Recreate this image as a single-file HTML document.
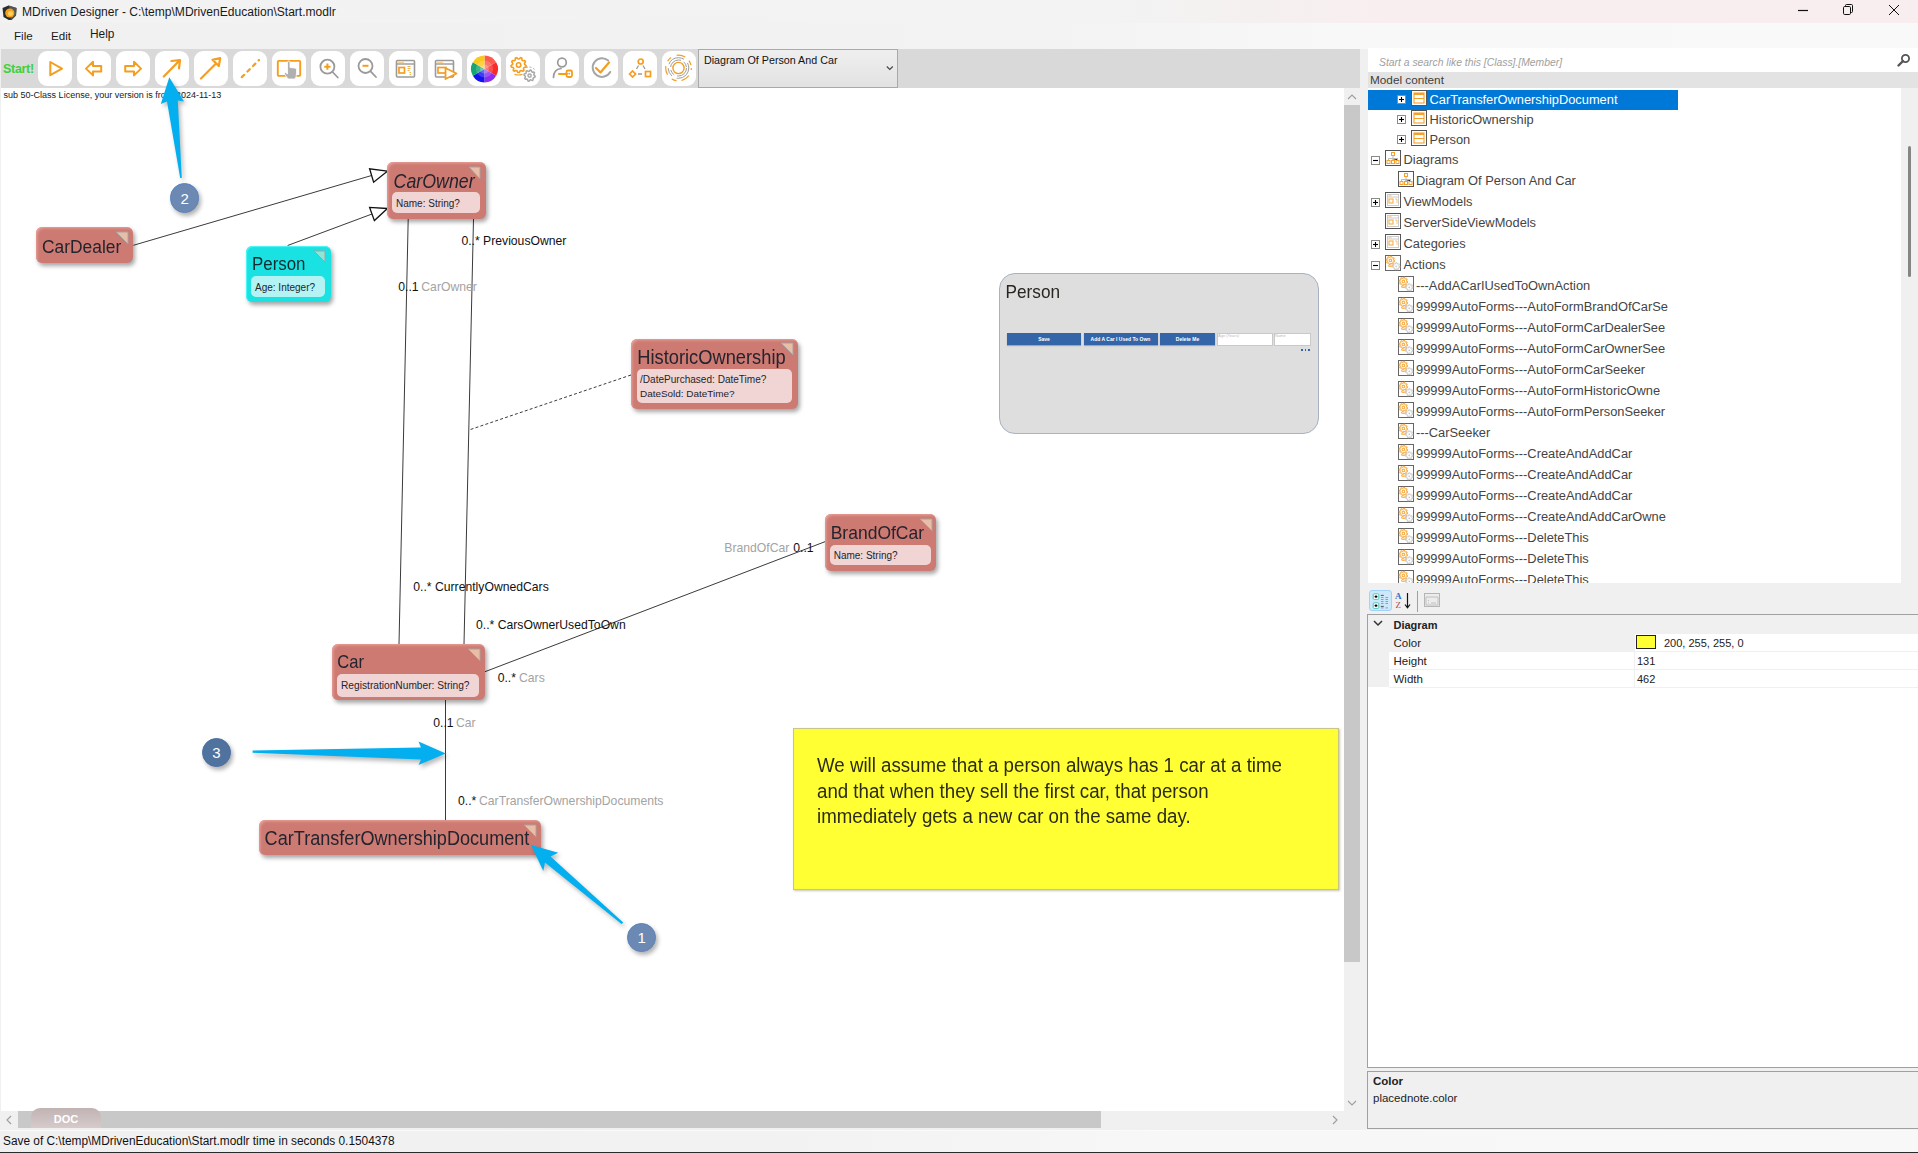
<!DOCTYPE html>
<html><head><meta charset="utf-8">
<style>
*{box-sizing:border-box;margin:0;padding:0}
html,body{width:1918px;height:1153px;overflow:hidden;background:#f0f0f0;font-family:"Liberation Sans",sans-serif;color:#000;position:relative}
.a{position:absolute}
.t{position:absolute;white-space:pre}
#title{left:0;top:0;width:1918px;height:23px;background:linear-gradient(90deg,#f2f2f2 0%,#f3f3f3 58%,#f5f0f0 66%,#f9eeef 73%,#f9eeef 100%)}
#menu{left:0;top:23px;width:1918px;height:26px;background:linear-gradient(90deg,#f0f0f0 0%,#f3f3f3 55%,#f8f8f8 70%,#f9f9f9 100%)}
#tb{left:1px;top:49px;width:1359px;height:39px;background:#d9d9d9}
.btn{position:absolute;top:51px;width:34px;height:35px;background:#fff;border-radius:9px}
.btn svg{position:absolute;left:0;top:0}
#canvas{left:1px;top:88px;width:1343px;height:1023px;background:#fff;overflow:hidden}
#vsb{left:1344px;top:88px;width:16px;height:1023px;background:#f0f0f0}
#hsb{left:0;top:1111px;width:1344px;height:17px;background:#f0f0f0}
#status{left:0;top:1130px;width:1918px;height:22px;background:linear-gradient(90deg,#f0f0f0 0%,#f2f2f2 40%,#f7f7f7 60%,#f8f8f8 100%);border-top:1px solid #fafafa}
.cls{position:absolute;border-radius:6px;background:#cd7a73;box-shadow:2px 3px 4px rgba(0,0,0,.35), inset 2px 2px 3px -1px #eda49c}
.cls.cy{background:#1ae2e2;box-shadow:2px 3px 4px rgba(0,0,0,.35), inset 1px 1px 1px #4ff8f8}
.att{position:absolute;border-radius:5px;background:#f0d5d4}
.cy .att{background:#b4f3f3}
.ct{color:#24242e}
.tri{position:absolute;width:12px;height:12px}
</style></head><body>
<div id="title" class="a"></div>
<div id="menu" class="a"></div>
<svg class="a" style="left:1px;top:3px" width="16" height="17" viewBox="0 0 16 17">
<polygon points="1.5,5 7.5,2.5 15.5,5 15,12.5 9.5,18 2.5,14" fill="#2b2b2b"/>
<polygon points="7.5,2.5 15.5,5 15,12.5 9.5,18 10,9" fill="#555"/>
<circle cx="8.8" cy="10" r="4.6" fill="#f7a21b"/><circle cx="9.5" cy="10.5" r="2.5" fill="#ffd05a"/>
</svg>
<div class="t" style="left:22px;top:6.18px;font-size:12.07px;line-height:12.07px;color:#1a1a1a;">MDriven Designer - C:\temp\MDrivenEducation\Start.modlr</div>
<svg class="a" style="left:1790px;top:0" width="128" height="22">
<line x1="8" y1="10.5" x2="18" y2="10.5" stroke="#111" stroke-width="1.2"/>
<rect x="53.5" y="6.5" width="7" height="8" rx="1.2" fill="none" stroke="#111" stroke-width="1"/>
<path d="M55.5 6.5 V5.5 Q55.5 4.5 56.5 4.5 H61.5 Q62.5 4.5 62.5 5.5 V11.5 Q62.5 12.5 61.5 12.5 H60.5" fill="none" stroke="#111" stroke-width="1"/>
<line x1="99" y1="5" x2="109" y2="15" stroke="#111" stroke-width="1"/><line x1="109" y1="5" x2="99" y2="15" stroke="#111" stroke-width="1"/>
</svg>
<div class="t" style="left:14px;top:29.58px;font-size:11.6px;line-height:11.6px;color:#1a1a1a;">File</div>
<div class="t" style="left:51px;top:29.58px;font-size:11.6px;line-height:11.6px;color:#1a1a1a;">Edit</div>
<div class="t" style="left:90px;top:29.33px;font-size:11.9px;line-height:11.9px;color:#1a1a1a;">Help</div>
<div id="tb" class="a"></div>
<div class="t" style="left:3px;top:60px;font-size:12.5px;line-height:18px;font-weight:bold;color:#3bd13b;letter-spacing:-0.3px">Start!</div>
<div class="btn" style="left:38px"><svg width="34" height="35" viewBox="0 0 34 35"><path d="M12.3 11 L24 17.6 L12.3 24.2 Z" fill="none" stroke="#f59e1e" stroke-width="2" stroke-linejoin="round"/></svg></div>
<div class="btn" style="left:77px"><svg width="34" height="35" viewBox="0 0 34 35"><path d="M9 17.6 L16 10.8 V15 H24.2 V20.4 H16 V24.4 Z" fill="none" stroke="#f59e1e" stroke-width="2" stroke-linejoin="round"/></svg></div>
<div class="btn" style="left:116px"><svg width="34" height="35" viewBox="0 0 34 35"><path d="M25 17.6 L18 10.8 V15 H9.2 V20.4 H18 V24.4 Z" fill="none" stroke="#f59e1e" stroke-width="2" stroke-linejoin="round"/></svg></div>
<div class="btn" style="left:155px"><svg width="34" height="35" viewBox="0 0 34 35"><path d="M8.8 25.5 L24.5 9.5 M16.5 10 L25 9 L24 17.5" fill="none" stroke="#f59e1e" stroke-width="2.2" stroke-linecap="round" stroke-linejoin="round"/></svg></div>
<div class="btn" style="left:194px"><svg width="34" height="35" viewBox="0 0 34 35"><path d="M7 27.5 L21.5 13" fill="none" stroke="#f59e1e" stroke-width="2.2" stroke-linecap="round"/><path d="M18.5 8.8 L26.2 7.2 L24.8 15 Z" fill="none" stroke="#f59e1e" stroke-width="2.2" stroke-linejoin="round"/></svg></div>
<div class="btn" style="left:233px"><svg width="34" height="35" viewBox="0 0 34 35"><path d="M8.5 26.5 L26 9" fill="none" stroke="#f59e1e" stroke-width="2.2" stroke-linecap="round" stroke-dasharray="3.3 4.6" stroke-dashoffset="-0.5"/></svg></div>
<div class="btn" style="left:272px"><svg width="34" height="35" viewBox="0 0 34 35"><rect x="5.8" y="9.9" width="22.4" height="15" rx="0.8" fill="none" stroke="#f59e1e" stroke-width="1.9"/><path d="M15.5 15 V23 L13.5 21.5 Q12 21 12.5 23 L16 28 H23 Q24.5 26 24.5 22 V18.5 Q24.5 17 23 17 L18 16.5 V11.5 Q18 10 16.8 10 Q15.5 10 15.5 11.5 Z" fill="#b0b0b0" stroke="#fff" stroke-width="0.8"/></svg></div>
<div class="btn" style="left:311px"><svg width="34" height="35" viewBox="0 0 34 35"><circle cx="16.4" cy="15.7" r="7" fill="none" stroke="#9a9a9a" stroke-width="1.8"/><path d="M21.5 21 L26.8 26.5" stroke="#9a9a9a" stroke-width="1.8" stroke-linecap="round"/><path d="M13.3 15.7 H19.5 M16.4 12.6 V18.8" stroke="#f59e1e" stroke-width="2"/></svg></div>
<div class="btn" style="left:350px"><svg width="34" height="35" viewBox="0 0 34 35"><circle cx="15.5" cy="15" r="7" fill="none" stroke="#9a9a9a" stroke-width="1.8"/><path d="M20.6 20.3 L26 26" stroke="#9a9a9a" stroke-width="1.8" stroke-linecap="round"/><path d="M12.5 14.8 H18.5" stroke="#f59e1e" stroke-width="2"/></svg></div>
<div class="btn" style="left:389px"><svg width="34" height="35" viewBox="0 0 34 35"><rect x="7.5" y="9.5" width="18" height="16.5" rx="1" fill="none" stroke="#9a9a9a" stroke-width="1.6"/><path d="M7.5 13 H25.5" stroke="#9a9a9a" stroke-width="1.4"/><path d="M9.5 11.3 h1 m1 0 h1 m1 0 h1" stroke="#f59e1e" stroke-width="1.2"/><rect x="10" y="16.5" width="5.5" height="5.5" fill="none" stroke="#f59e1e" stroke-width="1.7"/><path d="M18.5 15.5 h3 M18.5 17.5 h3 M18.5 19.5 h2 M20.5 21.5 h1.5 M20.5 23.5 h1.5" stroke="#f59e1e" stroke-width="1" opacity=".8"/></svg></div>
<div class="btn" style="left:428px"><svg width="34" height="35" viewBox="0 0 34 35"><rect x="7.5" y="9.5" width="18" height="16.5" rx="1" fill="none" stroke="#9a9a9a" stroke-width="1.6"/><path d="M7.5 13 H25.5" stroke="#9a9a9a" stroke-width="1.4"/><path d="M9.5 11.3 h1 m1 0 h1 m1 0 h1" stroke="#f59e1e" stroke-width="1.2"/><rect x="10" y="16.5" width="8" height="5.5" fill="none" stroke="#f59e1e" stroke-width="1.7"/><path d="M17.5 17 L28.5 22.5 L17.5 28 Z" fill="#fff" stroke="#f59e1e" stroke-width="1.8" stroke-linejoin="round"/></svg></div>
<div class="btn" style="left:467px"><svg width="34" height="35" viewBox="0 0 34 35"><path d="M17.5 18 L17.50 4.50 A13.5 13.5 0 0 1 29.19 11.25 Z" fill="#fb5a4e"/><path d="M17.5 18 L29.19 11.25 A13.5 13.5 0 0 1 29.19 24.75 Z" fill="#f82b2b"/><path d="M17.5 18 L29.19 24.75 A13.5 13.5 0 0 1 17.50 31.50 Z" fill="#8e2cf0"/><path d="M17.5 18 L17.50 31.50 A13.5 13.5 0 0 1 5.81 24.75 Z" fill="#1313f0"/><path d="M17.5 18 L5.81 24.75 A13.5 13.5 0 0 1 5.81 11.25 Z" fill="#17a673"/><path d="M17.5 18 L5.81 11.25 A13.5 13.5 0 0 1 17.50 4.50 Z" fill="#f9c81a"/><circle cx="17.5" cy="18" r="8.5" fill="#fff" opacity=".18"/><circle cx="17.5" cy="18" r="4.5" fill="#fff" opacity=".22"/></svg></div>
<div class="btn" style="left:506px"><svg width="34" height="35" viewBox="0 0 34 35"><polygon points="20.17,14.66 19.94,15.97 18.04,16.54 17.51,17.44 17.97,19.37 16.96,20.23 15.14,19.44 14.15,19.80 13.26,21.57 11.94,21.57 11.05,19.80 10.06,19.44 8.24,20.23 7.23,19.37 7.69,17.44 7.16,16.54 5.26,15.97 5.03,14.66 6.62,13.48 6.80,12.45 5.71,10.79 6.37,9.64 8.36,9.76 9.16,9.09 9.39,7.11 10.63,6.66 12.08,8.02 13.12,8.02 14.57,6.66 15.81,7.11 16.04,9.09 16.84,9.76 18.83,9.64 19.49,10.79 18.40,12.45 18.58,13.48" fill="none" stroke="#f59e1e" stroke-width="1.6" stroke-linejoin="round"/><circle cx="12.6" cy="14" r="2.2" fill="none" stroke="#f59e1e" stroke-width="1.6"/><polygon points="29.17,25.15 28.96,26.23 27.48,26.67 27.00,27.39 27.15,28.93 26.24,29.54 24.88,28.81 24.03,28.98 23.05,30.17 21.97,29.96 21.53,28.48 20.81,28.00 19.27,28.15 18.66,27.24 19.39,25.88 19.22,25.03 18.03,24.05 18.24,22.97 19.72,22.53 20.20,21.81 20.05,20.27 20.96,19.66 22.32,20.39 23.17,20.22 24.15,19.03 25.23,19.24 25.67,20.72 26.39,21.20 27.93,21.05 28.54,21.96 27.81,23.32 27.98,24.17" fill="none" stroke="#a8a8a8" stroke-width="1.5" stroke-linejoin="round"/><circle cx="23.6" cy="24.6" r="1.6" fill="none" stroke="#a8a8a8" stroke-width="1.5"/><path d="M8.5 23.2 Q12.5 24.8 16.5 23.2" stroke="#f59e1e" stroke-width="1.1" fill="none"/><path d="M20 16.5 A8 8 0 0 1 29 19" stroke="#a8a8a8" stroke-width="1" fill="none" stroke-dasharray="2 1.5"/></svg></div>
<div class="btn" style="left:545px"><svg width="34" height="35" viewBox="0 0 34 35"><circle cx="17" cy="11.5" r="4.3" fill="none" stroke="#9a9a9a" stroke-width="1.7"/><path d="M8.5 26.5 Q8.5 18.5 16 17.5" fill="none" stroke="#9a9a9a" stroke-width="1.7" stroke-linecap="round"/><path d="M14 23 H22" stroke="#f59e1e" stroke-width="2" stroke-linecap="round"/><rect x="21.5" y="19.5" width="5.5" height="6.5" rx="1.5" fill="none" stroke="#f59e1e" stroke-width="1.8"/><circle cx="24.2" cy="22.6" r="0.9" fill="#f59e1e"/></svg></div>
<div class="btn" style="left:584px"><svg width="34" height="35" viewBox="0 0 34 35"><path d="M24.2 9.6 A9.3 9.3 0 1 0 26.2 21" fill="none" stroke="#a6a6a6" stroke-width="2" stroke-linecap="round"/><path d="M12 17 L16.5 21.5 L25 11.5" fill="none" stroke="#f59e1e" stroke-width="2.2" stroke-linecap="round" stroke-linejoin="round"/></svg></div>
<div class="btn" style="left:623px"><svg width="34" height="35" viewBox="0 0 34 35"><circle cx="17.7" cy="10.5" r="2.5" fill="none" stroke="#f59e1e" stroke-width="1.7"/><path d="M9.6 20 L12.6 23 L9.6 26 L6.6 23 Z" fill="none" stroke="#f59e1e" stroke-width="1.7"/><rect x="22.5" y="20.5" width="5" height="5" fill="none" stroke="#f59e1e" stroke-width="1.7"/><path d="M15.5 14.5 L13.5 18 M20 14.5 L22 18 M15 23 H19" stroke="#9a9a9a" stroke-width="1.3"/></svg></div>
<div class="btn" style="left:662px"><svg width="34" height="35" viewBox="0 0 34 35"><circle cx="16.5" cy="17" r="5.6" fill="none" stroke="#f59e1e" stroke-width="1.4"/><circle cx="16.5" cy="17" r="8" fill="none" stroke="#9c9c9c" stroke-width="1" stroke-dasharray="14 3 6 3"/><circle cx="16.5" cy="17" r="10.3" fill="none" stroke="#9c9c9c" stroke-width="1" stroke-dasharray="18 5 9 4"/><circle cx="16.5" cy="17" r="12.8" fill="none" stroke="#f59e1e" stroke-width="1.2" stroke-dasharray="5 6 9 5" stroke-dashoffset="3"/></svg></div>
<div class="a" style="left:698px;top:49px;width:200px;height:39px;background:linear-gradient(#efefef,#e2e2e2);border:1px solid #a9a9a9"></div>
<div class="t" style="left:704px;top:55.03px;font-size:10.72px;line-height:10.72px;color:#111;">Diagram Of Person And Car</div>
<svg class="a" style="left:884.5px;top:64.5px" width="10" height="7"><path d="M1.8 1.5 L4.8 4.5 L7.8 1.5" fill="none" stroke="#444" stroke-width="1.1"/></svg>
<div id="canvas" class="a"></div>
<div id="vsb" class="a"><div class="a" style="left:0;top:17px;width:16px;height:857px;background:#c8c8c8"></div></div>
<svg class="a" style="left:1346px;top:92px" width="12" height="10"><path d="M2 7 L6 3 L10 7" fill="none" stroke="#a0a0a0" stroke-width="1.2"/></svg>
<svg class="a" style="left:1346px;top:1098px" width="12" height="10"><path d="M2 3 L6 7 L10 3" fill="none" stroke="#a0a0a0" stroke-width="1.2"/></svg>
<div id="hsb" class="a"><div class="a" style="left:18px;top:0;width:1083px;height:17px;background:#c8c8c8"></div></div>
<svg class="a" style="left:4px;top:1114px" width="10" height="12"><path d="M7 2 L3 6 L7 10" fill="none" stroke="#a0a0a0" stroke-width="1.2"/></svg>
<svg class="a" style="left:1330px;top:1114px" width="10" height="12"><path d="M3 2 L7 6 L3 10" fill="none" stroke="#a0a0a0" stroke-width="1.2"/></svg>
<div id="status" class="a"></div>
<div class="a" style="left:0;top:1152px;width:1918px;height:1px;background:#2a2a2a"></div>
<div class="t" style="left:3px;top:1136.45px;font-size:11.87px;line-height:11.87px;color:#111;">Save of C:\temp\MDrivenEducation\Start.modlr time in seconds 0.1504378</div>
<svg class="a" style="left:0;top:0" width="1344" height="1111">
<g stroke="#3a3a3a" stroke-width="1" fill="none">
<line x1="133.4" y1="245.3" x2="371.6" y2="175.5"/>
<polygon points="387.4,171.2 369.6,168.8 373.6,182.2" fill="#fff" stroke="#111" stroke-width="1.3"/>
<line x1="287.6" y1="245.5" x2="372" y2="214"/>
<polygon points="387.4,208.5 369.6,207.4 374.4,220.6" fill="#fff" stroke="#111" stroke-width="1.3"/>
<line x1="408.2" y1="219" x2="399" y2="644"/>
<line x1="473.5" y1="219" x2="464" y2="644"/>
<line x1="631" y1="375" x2="469" y2="430" stroke-dasharray="3 2.2"/>
<line x1="485" y1="671.7" x2="825" y2="541.7"/>
<line x1="445.5" y1="700" x2="445.5" y2="820"/>
</g></svg>
<div class="cls" style="left:387px;top:162px;width:99px;height:57px"></div>
<div class="att" style="left:392px;top:192px;width:88px;height:21px;background:#f0d5d4"></div>
<svg class="a" style="left:468px;top:166px" width="13" height="14"><polygon points="1,1 12,1 12,13" fill="#e8bfa6" stroke="#a8a0a0" stroke-width="1"/></svg>
<div class="t" style="left:393.6px;top:173.63px;font-size:17.8px;line-height:17.8px;color:#24242e;transform:scaleY(1.1);transform-origin:0 15.07px;font-style:italic">CarOwner</div>
<div class="t" style="left:396px;top:199.03px;font-size:10px;line-height:10px;color:#24242e;">Name: String?</div>
<div class="cls" style="left:36px;top:227px;width:97px;height:36px"></div>
<svg class="a" style="left:115px;top:231px" width="14" height="14"><polygon points="1,1 13,1 13,13" fill="#e8bfa6" stroke="#a8a0a0" stroke-width="1"/></svg>
<div class="t" style="left:42px;top:238.87px;font-size:17.4px;line-height:17.4px;color:#24242e;transform:scaleY(1.1);transform-origin:0 14.73px;">CarDealer</div>
<div class="cls cy" style="left:246px;top:246px;width:85px;height:56px"></div>
<div class="att" style="left:251px;top:276px;width:74px;height:21px;background:#b4f3f3"></div>
<svg class="a" style="left:313px;top:250px" width="13" height="13"><polygon points="1,1 12,1 12,12" fill="#8fe6d8" stroke="#a8a0a0" stroke-width="1"/></svg>
<div class="t" style="left:252px;top:257.39px;font-size:16.9px;line-height:16.9px;color:#102a30;transform:scaleY(1.1);transform-origin:0 14.31px;">Person</div>
<div class="t" style="left:255px;top:283.04px;font-size:10px;line-height:10px;color:#24242e;">Age: Integer?</div>
<div class="cls" style="left:631px;top:339px;width:167px;height:70px"></div>
<div class="att" style="left:637px;top:369px;width:155px;height:34px;background:#f0d5d4"></div>
<svg class="a" style="left:780px;top:342px" width="14" height="14"><polygon points="1,1 13,1 13,13" fill="#e8bfa6" stroke="#a8a0a0" stroke-width="1"/></svg>
<div class="t" style="left:637.3px;top:348.71px;font-size:18.3px;line-height:18.3px;color:#24242e;transform:scaleY(1.1);transform-origin:0 15.49px;">HistoricOwnership</div>
<div class="t" style="left:640px;top:375.18px;font-size:10.06px;line-height:10.06px;color:#24242e;">/DatePurchased: DateTime?</div>
<div class="t" style="left:640px;top:389.09px;font-size:9.94px;line-height:9.94px;color:#24242e;">DateSold: DateTime?</div>
<div class="cls" style="left:825px;top:514px;width:111px;height:57px"></div>
<div class="att" style="left:830px;top:545px;width:101px;height:20px;background:#f0d5d4"></div>
<svg class="a" style="left:919px;top:518px" width="14" height="14"><polygon points="1,1 13,1 13,13" fill="#e8bfa6" stroke="#a8a0a0" stroke-width="1"/></svg>
<div class="t" style="left:830.7px;top:525.39px;font-size:17.5px;line-height:17.5px;color:#24242e;transform:scaleY(1.1);transform-origin:0 14.81px;">BrandOfCar</div>
<div class="t" style="left:833.7px;top:550.73px;font-size:10px;line-height:10px;color:#24242e;">Name: String?</div>
<div class="cls" style="left:332px;top:644px;width:153px;height:56px"></div>
<div class="att" style="left:337px;top:674px;width:142px;height:23px;background:#f0d5d4"></div>
<svg class="a" style="left:467px;top:648px" width="14" height="14"><polygon points="1,1 13,1 13,13" fill="#e8bfa6" stroke="#a8a0a0" stroke-width="1"/></svg>
<div class="t" style="left:337.3px;top:655.15px;font-size:16.6px;line-height:16.6px;color:#24242e;transform:scaleY(1.1);transform-origin:0 14.05px;">Car</div>
<div class="t" style="left:341px;top:680.57px;font-size:10.2px;line-height:10.2px;color:#24242e;">RegistrationNumber: String?</div>
<div class="cls" style="left:259px;top:820px;width:282px;height:35px"></div>
<svg class="a" style="left:523px;top:824px" width="14" height="14"><polygon points="1,1 13,1 13,13" fill="#e8bfa6" stroke="#a8a0a0" stroke-width="1"/></svg>
<div class="t" style="left:264.6px;top:830.18px;font-size:18.1px;line-height:18.1px;color:#24242e;transform:scaleY(1.1);transform-origin:0 15.32px;">CarTransferOwnershipDocument</div>
<div class="t" style="left:461.4px;top:235.37px;font-size:12.2px;line-height:12.2px;color:#111;">0..* PreviousOwner</div>
<div class="t" style="left:398.3px;top:280.57px;font-size:12.2px;line-height:12.2px;color:#111;">0..1</div>
<div class="t" style="left:421.3px;top:280.57px;font-size:12.2px;line-height:12.2px;color:#a3a3a3;">CarOwner</div>
<div class="t" style="left:724.3px;top:541.57px;font-size:12.2px;line-height:12.2px;color:#a3a3a3;">BrandOfCar</div>
<div class="t" style="left:793.3px;top:541.57px;font-size:12.2px;line-height:12.2px;color:#111;">0..1</div>
<div class="t" style="left:413.3px;top:580.57px;font-size:12.2px;line-height:12.2px;color:#111;">0..* CurrentlyOwnedCars</div>
<div class="t" style="left:476px;top:618.87px;font-size:12.2px;line-height:12.2px;color:#111;">0..* CarsOwnerUsedToOwn</div>
<div class="t" style="left:497.7px;top:671.57px;font-size:12.2px;line-height:12.2px;color:#111;">0..*</div>
<div class="t" style="left:519px;top:671.57px;font-size:12.2px;line-height:12.2px;color:#a3a3a3;">Cars</div>
<div class="t" style="left:433.3px;top:716.57px;font-size:12.2px;line-height:12.2px;color:#111;">0..1</div>
<div class="t" style="left:456px;top:716.57px;font-size:12.2px;line-height:12.2px;color:#a3a3a3;">Car</div>
<div class="t" style="left:458px;top:794.57px;font-size:12.2px;line-height:12.2px;color:#111;">0..*</div>
<div class="t" style="left:479px;top:794.57px;font-size:12.2px;line-height:12.2px;color:#a3a3a3;">CarTransferOwnershipDocuments</div>
<div class="a" style="left:999px;top:273px;width:320px;height:161px;background:#dedede;border:1px solid #a7b3c0;border-radius:16px"></div>
<div class="t" style="left:1005.6px;top:283.94px;font-size:17.2px;line-height:17.2px;color:#2a2520;transform:scaleY(1.08);transform-origin:0 100%">Person</div>
<div class="a" style="left:1007px;top:333px;width:74px;height:12px;background:#3465a8;box-shadow:0 1px 1px rgba(0,0,0,.25)"></div>
<div class="t" style="left:1007px;top:336px;width:74px;text-align:center;font-size:5px;line-height:6px;color:#fff;font-weight:bold">Save</div>
<div class="a" style="left:1083.5px;top:333px;width:74.0px;height:12px;background:#3465a8;box-shadow:0 1px 1px rgba(0,0,0,.25)"></div>
<div class="t" style="left:1083.5px;top:336px;width:74.0px;text-align:center;font-size:5px;line-height:6px;color:#fff;font-weight:bold">Add A Car I Used To Own</div>
<div class="a" style="left:1160px;top:333px;width:55px;height:12px;background:#3465a8;box-shadow:0 1px 1px rgba(0,0,0,.25)"></div>
<div class="t" style="left:1160px;top:336px;width:55px;text-align:center;font-size:5px;line-height:6px;color:#fff;font-weight:bold">Delete Me</div>
<div class="a" style="left:1216.5px;top:332.5px;width:56px;height:13px;background:#fff;border:1px solid #c9c9c9"></div>
<div class="a" style="left:1273.5px;top:332.5px;width:37px;height:13px;background:#fff;border:1px solid #c9c9c9"></div>
<div class="t" style="left:1218px;top:333px;font-size:4px;line-height:5px;color:#bbb">Age (Years)</div>
<div class="t" style="left:1275px;top:333px;font-size:4px;line-height:5px;color:#bbb">Name</div>
<div class="a" style="left:1301px;top:349px;width:9px;height:2px;background:repeating-linear-gradient(90deg,#3465a8 0 2px,transparent 2px 3.5px)"></div>
<div class="a" style="left:793px;top:728px;width:546px;height:162px;background:#ffff33;border:1px solid #c6c68c;box-shadow:1px 1px 2px rgba(90,90,40,.35), inset 0 0 1px #e0e070"></div>
<div class="t" style="left:817px;top:757.08px;font-size:18.69px;line-height:18.69px;color:#2b2b1a;transform:scaleY(1.1);transform-origin:0 15.82px;">We will assume that a person always has 1 car at a time</div>
<div class="t" style="left:817px;top:782.78px;font-size:18.69px;line-height:18.69px;color:#2b2b1a;transform:scaleY(1.1);transform-origin:0 15.82px;">and that when they sell the first car, that person</div>
<div class="t" style="left:817px;top:808.28px;font-size:18.69px;line-height:18.69px;color:#2b2b1a;transform:scaleY(1.1);transform-origin:0 15.82px;">immediately gets a new car on the same day.</div>
<div class="t" style="left:3.5px;top:91.26px;font-size:9.02px;line-height:9.02px;color:#1a1a1a;">sub 50-Class License, your version is from 2024-11-13</div>
<svg class="a" style="left:0;top:0;filter:drop-shadow(2px 3px 2px rgba(0,0,0,.28))" width="1344" height="1111">
<polygon fill="#03afef" points="169.3,77.2 184,101.6 177.8,100.5 181.8,178 180.2,178 167,101.5 160.8,104"/>
<polygon fill="#03afef" points="252.6,750.6 421,747.4 418.5,741.5 445.8,753.5 418.5,765 421,759.6 252.6,752.8"/>
<polygon fill="#03afef" points="531,845 558.3,852.7 550.5,856.5 623.2,922.4 621.5,924 545,862.5 543.3,871"/>
</svg>
<div class="a" style="left:169.9px;top:183.3px;width:29.4px;height:29.4px;border-radius:50%;background:#6c89b3;border:1.3px solid #5b82bd;box-shadow:2px 3px 4px rgba(0,0,0,.3)"></div>
<div class="t" style="left:174.6px;top:189.5px;width:20px;text-align:center;font-size:15px;line-height:17px;color:#fff">2</div>
<div class="a" style="left:201.8px;top:738.0999999999999px;width:29.4px;height:29.4px;border-radius:50%;background:#50729f;border:1.3px solid #4a6fa8;box-shadow:2px 3px 4px rgba(0,0,0,.3)"></div>
<div class="t" style="left:206.5px;top:744.3px;width:20px;text-align:center;font-size:15px;line-height:17px;color:#fff">3</div>
<div class="a" style="left:626.9px;top:923.0999999999999px;width:29.4px;height:29.4px;border-radius:50%;background:#6c89b3;border:1.3px solid #5b82bd;box-shadow:2px 3px 4px rgba(0,0,0,.3)"></div>
<div class="t" style="left:631.6px;top:929.3px;width:20px;text-align:center;font-size:15px;line-height:17px;color:#fff">1</div>
<div class="a" style="left:31px;top:1108px;width:70px;height:20px;border-radius:9px 9px 0 0;background:linear-gradient(#c2b3b3,#d6caca)"></div>
<div class="t" style="left:31px;top:1113px;width:70px;text-align:center;font-size:11px;line-height:12px;color:#fff;font-weight:bold">DOC</div>
<div class="a" style="left:1368px;top:48px;width:550px;height:24px;background:#fff"></div>
<div class="t" style="left:1379px;top:57.73px;font-size:10.36px;line-height:10.36px;color:#a0a0a0;font-style:italic">Start a search like this [Class].[Member]</div>
<svg class="a" style="left:1896px;top:53px" width="16" height="15"><circle cx="9.5" cy="5.5" r="3.6" fill="none" stroke="#555" stroke-width="1.8"/><path d="M7 8 L2.5 12.5" stroke="#555" stroke-width="2.4" stroke-linecap="round"/></svg>
<div class="a" style="left:1368px;top:72px;width:550px;height:17px;background:#e3e3e3"></div>
<div class="t" style="left:1370px;top:74.13px;font-size:11.78px;line-height:11.78px;color:#404040;">Model content</div>
<div class="a" style="left:1368px;top:88px;width:533px;height:495px;background:#fff;overflow:hidden" id="tree"></div>
<div class="a" style="left:1901px;top:88px;width:17px;height:495px;background:#f0f0f0"></div>
<div class="a" style="left:1907.5px;top:146px;width:3px;height:131px;background:#858585;border-radius:1.5px"></div>
<div class="a" style="left:1368px;top:90px;width:310px;height:20px;background:#0078d7"></div>
<div class="a" style="left:1368px;top:88px;width:532px;height:495px;overflow:hidden">
<div class="a" style="left:-1368px;top:-88px;width:1918px;height:1153px">
<svg class="a" style="left:1397px;top:95px" width="9" height="9"><rect x="0.5" y="0.5" width="8" height="8" fill="#fff" stroke="#8a8a8a" stroke-width="1"/><path d="M2 4.5 H7" stroke="#000" stroke-width="1.1"/><path d="M4.5 2 V7" stroke="#000" stroke-width="1.1"/></svg>
<svg class="a" style="left:1411px;top:90px" width="16" height="16"><rect x="0.5" y="0.5" width="15" height="15" fill="#fff" stroke="#555" stroke-width="1"/><rect x="3" y="3" width="10" height="10" fill="#fff" stroke="#f5a02a" stroke-width="1.1"/><rect x="3" y="3" width="10" height="2" fill="#f5a02a"/><path d="M3 8.5 H13" stroke="#f5a02a" stroke-width="1"/></svg>
<div class="t" style="left:1429.5px;top:94.02px;font-size:12.85px;line-height:12.85px;color:#fff;">CarTransferOwnershipDocument</div>
<svg class="a" style="left:1397px;top:115px" width="9" height="9"><rect x="0.5" y="0.5" width="8" height="8" fill="#fff" stroke="#8a8a8a" stroke-width="1"/><path d="M2 4.5 H7" stroke="#000" stroke-width="1.1"/><path d="M4.5 2 V7" stroke="#000" stroke-width="1.1"/></svg>
<svg class="a" style="left:1411px;top:110px" width="16" height="16"><rect x="0.5" y="0.5" width="15" height="15" fill="#fff" stroke="#555" stroke-width="1"/><rect x="3" y="3" width="10" height="10" fill="#fff" stroke="#f5a02a" stroke-width="1.1"/><rect x="3" y="3" width="10" height="2" fill="#f5a02a"/><path d="M3 8.5 H13" stroke="#f5a02a" stroke-width="1"/></svg>
<div class="t" style="left:1429.5px;top:114.02px;font-size:12.85px;line-height:12.85px;color:#444;">HistoricOwnership</div>
<svg class="a" style="left:1397px;top:135px" width="9" height="9"><rect x="0.5" y="0.5" width="8" height="8" fill="#fff" stroke="#8a8a8a" stroke-width="1"/><path d="M2 4.5 H7" stroke="#000" stroke-width="1.1"/><path d="M4.5 2 V7" stroke="#000" stroke-width="1.1"/></svg>
<svg class="a" style="left:1411px;top:130px" width="16" height="16"><rect x="0.5" y="0.5" width="15" height="15" fill="#fff" stroke="#555" stroke-width="1"/><rect x="3" y="3" width="10" height="10" fill="#fff" stroke="#f5a02a" stroke-width="1.1"/><rect x="3" y="3" width="10" height="2" fill="#f5a02a"/><path d="M3 8.5 H13" stroke="#f5a02a" stroke-width="1"/></svg>
<div class="t" style="left:1429.5px;top:134.02px;font-size:12.85px;line-height:12.85px;color:#444;">Person</div>
<svg class="a" style="left:1371px;top:156px" width="9" height="9"><rect x="0.5" y="0.5" width="8" height="8" fill="#fff" stroke="#8a8a8a" stroke-width="1"/><path d="M2 4.5 H7" stroke="#000" stroke-width="1.1"/></svg>
<svg class="a" style="left:1385px;top:150px" width="16" height="16"><rect x="0.5" y="0.5" width="15" height="15" fill="#fff" stroke="#555" stroke-width="1"/><rect x="6.5" y="2.5" width="3" height="3" fill="none" stroke="#f5a02a" stroke-width="1"/><path d="M8 6 V8 M3.5 8.5 H12.5 V10 M3.5 8.5 V10 M8 8 V10" stroke="#bbb" stroke-width="1"/><rect x="2" y="10.5" width="3" height="3" fill="none" stroke="#f5a02a" stroke-width="1"/><rect x="6.5" y="10.5" width="3" height="3" fill="none" stroke="#f5a02a" stroke-width="1"/><rect x="11" y="10.5" width="3" height="3" fill="none" stroke="#f5a02a" stroke-width="1"/></svg>
<div class="t" style="left:1403.5px;top:154.02px;font-size:12.85px;line-height:12.85px;color:#444;">Diagrams</div>
<svg class="a" style="left:1398px;top:171px" width="16" height="16"><rect x="0.5" y="0.5" width="15" height="15" fill="#fff" stroke="#555" stroke-width="1"/><rect x="6.5" y="2.5" width="3" height="3" fill="none" stroke="#f5a02a" stroke-width="1"/><path d="M8 6 V8 M3.5 8.5 H12.5 V10 M3.5 8.5 V10 M8 8 V10" stroke="#bbb" stroke-width="1"/><rect x="2" y="10.5" width="3" height="3" fill="none" stroke="#f5a02a" stroke-width="1"/><rect x="6.5" y="10.5" width="3" height="3" fill="none" stroke="#f5a02a" stroke-width="1"/><rect x="11" y="10.5" width="3" height="3" fill="none" stroke="#f5a02a" stroke-width="1"/></svg>
<div class="t" style="left:1416px;top:175.02px;font-size:12.85px;line-height:12.85px;color:#444;">Diagram Of Person And Car</div>
<svg class="a" style="left:1371px;top:198px" width="9" height="9"><rect x="0.5" y="0.5" width="8" height="8" fill="#fff" stroke="#8a8a8a" stroke-width="1"/><path d="M2 4.5 H7" stroke="#000" stroke-width="1.1"/><path d="M4.5 2 V7" stroke="#000" stroke-width="1.1"/></svg>
<svg class="a" style="left:1385px;top:192px" width="16" height="16"><rect x="0.5" y="0.5" width="15" height="15" fill="#fff" stroke="#555" stroke-width="1"/><rect x="2.5" y="2.5" width="11" height="11" fill="none" stroke="#ccc" stroke-width="1"/><path d="M2.5 5 H13.5" stroke="#ccc"/><rect x="4" y="7" width="4" height="4" fill="none" stroke="#f5a02a" stroke-width="1.2" opacity=".8"/><path d="M10 7 h2 v4" stroke="#f5a02a" stroke-width="1" fill="none" opacity=".6"/><path d="M3.5 3.8 h3" stroke="#f5a02a" stroke-width="1" opacity=".6"/></svg>
<div class="t" style="left:1403.5px;top:196.02px;font-size:12.85px;line-height:12.85px;color:#444;">ViewModels</div>
<svg class="a" style="left:1385px;top:213px" width="16" height="16"><rect x="0.5" y="0.5" width="15" height="15" fill="#fff" stroke="#555" stroke-width="1"/><rect x="2.5" y="2.5" width="11" height="11" fill="none" stroke="#ccc" stroke-width="1"/><path d="M2.5 5 H13.5" stroke="#ccc"/><rect x="4" y="7" width="4" height="4" fill="none" stroke="#f5a02a" stroke-width="1.2" opacity=".8"/><path d="M10 7 h2 v4" stroke="#f5a02a" stroke-width="1" fill="none" opacity=".6"/><path d="M3.5 3.8 h3" stroke="#f5a02a" stroke-width="1" opacity=".6"/></svg>
<div class="t" style="left:1403.5px;top:217.02px;font-size:12.85px;line-height:12.85px;color:#444;">ServerSideViewModels</div>
<svg class="a" style="left:1371px;top:240px" width="9" height="9"><rect x="0.5" y="0.5" width="8" height="8" fill="#fff" stroke="#8a8a8a" stroke-width="1"/><path d="M2 4.5 H7" stroke="#000" stroke-width="1.1"/><path d="M4.5 2 V7" stroke="#000" stroke-width="1.1"/></svg>
<svg class="a" style="left:1385px;top:234px" width="16" height="16"><rect x="0.5" y="0.5" width="15" height="15" fill="#fff" stroke="#555" stroke-width="1"/><rect x="2.5" y="2.5" width="11" height="11" fill="none" stroke="#ccc" stroke-width="1"/><path d="M2.5 5 H13.5" stroke="#ccc"/><rect x="4" y="7" width="4" height="4" fill="none" stroke="#f5a02a" stroke-width="1.2" opacity=".8"/><path d="M10 7 h2 v4" stroke="#f5a02a" stroke-width="1" fill="none" opacity=".6"/><path d="M3.5 3.8 h3" stroke="#f5a02a" stroke-width="1" opacity=".6"/></svg>
<div class="t" style="left:1403.5px;top:238.02px;font-size:12.85px;line-height:12.85px;color:#444;">Categories</div>
<svg class="a" style="left:1371px;top:261px" width="9" height="9"><rect x="0.5" y="0.5" width="8" height="8" fill="#fff" stroke="#8a8a8a" stroke-width="1"/><path d="M2 4.5 H7" stroke="#000" stroke-width="1.1"/></svg>
<svg class="a" style="left:1385px;top:255px" width="16" height="16"><rect x="0.5" y="0.5" width="15" height="15" fill="#fff" stroke="#666" stroke-width="1"/><polygon points="14.88,11.70 14.70,12.49 13.59,12.74 13.21,13.21 13.22,14.35 12.49,14.70 11.60,13.98 11.00,13.98 10.11,14.70 9.38,14.35 9.39,13.21 9.01,12.74 7.90,12.49 7.72,11.70 8.62,11.00 8.75,10.41 8.25,9.38 8.75,8.75 9.86,9.01 10.41,8.75 10.90,7.72 11.70,7.72 12.19,8.75 12.74,9.01 13.85,8.75 14.35,9.38 13.85,10.41 13.98,11.00" fill="none" stroke="#cfcfcf" stroke-width="1.1" stroke-linejoin="round"/><circle cx="11.3" cy="11.3" r="0.9" fill="#c4c4c4"/><polygon points="9.58,5.81 9.42,6.62 8.22,6.91 7.87,7.43 8.06,8.65 7.38,9.10 6.33,8.46 5.71,8.58 4.99,9.58 4.18,9.42 3.89,8.22 3.37,7.87 2.15,8.06 1.70,7.38 2.34,6.33 2.22,5.71 1.22,4.99 1.38,4.18 2.58,3.89 2.93,3.37 2.74,2.15 3.42,1.70 4.47,2.34 5.09,2.22 5.81,1.22 6.62,1.38 6.91,2.58 7.43,2.93 8.65,2.74 9.10,3.42 8.46,4.47 8.58,5.09" fill="none" stroke="#f6b04e" stroke-width="1.1" stroke-linejoin="round"/><circle cx="5.4" cy="5.4" r="1.3" fill="none" stroke="#f6b04e" stroke-width="1.1"/><path d="M3 10.5 Q5.5 12.3 8 10.5" stroke="#f6b04e" stroke-width="1.1" fill="none"/></svg>
<div class="t" style="left:1403.5px;top:259.02px;font-size:12.85px;line-height:12.85px;color:#444;">Actions</div>
<svg class="a" style="left:1398px;top:276px" width="16" height="16"><rect x="0.5" y="0.5" width="15" height="15" fill="#fff" stroke="#666" stroke-width="1"/><polygon points="14.88,11.70 14.70,12.49 13.59,12.74 13.21,13.21 13.22,14.35 12.49,14.70 11.60,13.98 11.00,13.98 10.11,14.70 9.38,14.35 9.39,13.21 9.01,12.74 7.90,12.49 7.72,11.70 8.62,11.00 8.75,10.41 8.25,9.38 8.75,8.75 9.86,9.01 10.41,8.75 10.90,7.72 11.70,7.72 12.19,8.75 12.74,9.01 13.85,8.75 14.35,9.38 13.85,10.41 13.98,11.00" fill="none" stroke="#cfcfcf" stroke-width="1.1" stroke-linejoin="round"/><circle cx="11.3" cy="11.3" r="0.9" fill="#c4c4c4"/><polygon points="9.58,5.81 9.42,6.62 8.22,6.91 7.87,7.43 8.06,8.65 7.38,9.10 6.33,8.46 5.71,8.58 4.99,9.58 4.18,9.42 3.89,8.22 3.37,7.87 2.15,8.06 1.70,7.38 2.34,6.33 2.22,5.71 1.22,4.99 1.38,4.18 2.58,3.89 2.93,3.37 2.74,2.15 3.42,1.70 4.47,2.34 5.09,2.22 5.81,1.22 6.62,1.38 6.91,2.58 7.43,2.93 8.65,2.74 9.10,3.42 8.46,4.47 8.58,5.09" fill="none" stroke="#f6b04e" stroke-width="1.1" stroke-linejoin="round"/><circle cx="5.4" cy="5.4" r="1.3" fill="none" stroke="#f6b04e" stroke-width="1.1"/><path d="M3 10.5 Q5.5 12.3 8 10.5" stroke="#f6b04e" stroke-width="1.1" fill="none"/></svg>
<div class="t" style="left:1416px;top:280.02px;font-size:12.85px;line-height:12.85px;color:#444;">---AddACarIUsedToOwnAction</div>
<svg class="a" style="left:1398px;top:297px" width="16" height="16"><rect x="0.5" y="0.5" width="15" height="15" fill="#fff" stroke="#666" stroke-width="1"/><polygon points="14.88,11.70 14.70,12.49 13.59,12.74 13.21,13.21 13.22,14.35 12.49,14.70 11.60,13.98 11.00,13.98 10.11,14.70 9.38,14.35 9.39,13.21 9.01,12.74 7.90,12.49 7.72,11.70 8.62,11.00 8.75,10.41 8.25,9.38 8.75,8.75 9.86,9.01 10.41,8.75 10.90,7.72 11.70,7.72 12.19,8.75 12.74,9.01 13.85,8.75 14.35,9.38 13.85,10.41 13.98,11.00" fill="none" stroke="#cfcfcf" stroke-width="1.1" stroke-linejoin="round"/><circle cx="11.3" cy="11.3" r="0.9" fill="#c4c4c4"/><polygon points="9.58,5.81 9.42,6.62 8.22,6.91 7.87,7.43 8.06,8.65 7.38,9.10 6.33,8.46 5.71,8.58 4.99,9.58 4.18,9.42 3.89,8.22 3.37,7.87 2.15,8.06 1.70,7.38 2.34,6.33 2.22,5.71 1.22,4.99 1.38,4.18 2.58,3.89 2.93,3.37 2.74,2.15 3.42,1.70 4.47,2.34 5.09,2.22 5.81,1.22 6.62,1.38 6.91,2.58 7.43,2.93 8.65,2.74 9.10,3.42 8.46,4.47 8.58,5.09" fill="none" stroke="#f6b04e" stroke-width="1.1" stroke-linejoin="round"/><circle cx="5.4" cy="5.4" r="1.3" fill="none" stroke="#f6b04e" stroke-width="1.1"/><path d="M3 10.5 Q5.5 12.3 8 10.5" stroke="#f6b04e" stroke-width="1.1" fill="none"/></svg>
<div class="t" style="left:1416px;top:301.02px;font-size:12.85px;line-height:12.85px;color:#444;">99999AutoForms---AutoFormBrandOfCarSe</div>
<svg class="a" style="left:1398px;top:318px" width="16" height="16"><rect x="0.5" y="0.5" width="15" height="15" fill="#fff" stroke="#666" stroke-width="1"/><polygon points="14.88,11.70 14.70,12.49 13.59,12.74 13.21,13.21 13.22,14.35 12.49,14.70 11.60,13.98 11.00,13.98 10.11,14.70 9.38,14.35 9.39,13.21 9.01,12.74 7.90,12.49 7.72,11.70 8.62,11.00 8.75,10.41 8.25,9.38 8.75,8.75 9.86,9.01 10.41,8.75 10.90,7.72 11.70,7.72 12.19,8.75 12.74,9.01 13.85,8.75 14.35,9.38 13.85,10.41 13.98,11.00" fill="none" stroke="#cfcfcf" stroke-width="1.1" stroke-linejoin="round"/><circle cx="11.3" cy="11.3" r="0.9" fill="#c4c4c4"/><polygon points="9.58,5.81 9.42,6.62 8.22,6.91 7.87,7.43 8.06,8.65 7.38,9.10 6.33,8.46 5.71,8.58 4.99,9.58 4.18,9.42 3.89,8.22 3.37,7.87 2.15,8.06 1.70,7.38 2.34,6.33 2.22,5.71 1.22,4.99 1.38,4.18 2.58,3.89 2.93,3.37 2.74,2.15 3.42,1.70 4.47,2.34 5.09,2.22 5.81,1.22 6.62,1.38 6.91,2.58 7.43,2.93 8.65,2.74 9.10,3.42 8.46,4.47 8.58,5.09" fill="none" stroke="#f6b04e" stroke-width="1.1" stroke-linejoin="round"/><circle cx="5.4" cy="5.4" r="1.3" fill="none" stroke="#f6b04e" stroke-width="1.1"/><path d="M3 10.5 Q5.5 12.3 8 10.5" stroke="#f6b04e" stroke-width="1.1" fill="none"/></svg>
<div class="t" style="left:1416px;top:322.02px;font-size:12.85px;line-height:12.85px;color:#444;">99999AutoForms---AutoFormCarDealerSee</div>
<svg class="a" style="left:1398px;top:339px" width="16" height="16"><rect x="0.5" y="0.5" width="15" height="15" fill="#fff" stroke="#666" stroke-width="1"/><polygon points="14.88,11.70 14.70,12.49 13.59,12.74 13.21,13.21 13.22,14.35 12.49,14.70 11.60,13.98 11.00,13.98 10.11,14.70 9.38,14.35 9.39,13.21 9.01,12.74 7.90,12.49 7.72,11.70 8.62,11.00 8.75,10.41 8.25,9.38 8.75,8.75 9.86,9.01 10.41,8.75 10.90,7.72 11.70,7.72 12.19,8.75 12.74,9.01 13.85,8.75 14.35,9.38 13.85,10.41 13.98,11.00" fill="none" stroke="#cfcfcf" stroke-width="1.1" stroke-linejoin="round"/><circle cx="11.3" cy="11.3" r="0.9" fill="#c4c4c4"/><polygon points="9.58,5.81 9.42,6.62 8.22,6.91 7.87,7.43 8.06,8.65 7.38,9.10 6.33,8.46 5.71,8.58 4.99,9.58 4.18,9.42 3.89,8.22 3.37,7.87 2.15,8.06 1.70,7.38 2.34,6.33 2.22,5.71 1.22,4.99 1.38,4.18 2.58,3.89 2.93,3.37 2.74,2.15 3.42,1.70 4.47,2.34 5.09,2.22 5.81,1.22 6.62,1.38 6.91,2.58 7.43,2.93 8.65,2.74 9.10,3.42 8.46,4.47 8.58,5.09" fill="none" stroke="#f6b04e" stroke-width="1.1" stroke-linejoin="round"/><circle cx="5.4" cy="5.4" r="1.3" fill="none" stroke="#f6b04e" stroke-width="1.1"/><path d="M3 10.5 Q5.5 12.3 8 10.5" stroke="#f6b04e" stroke-width="1.1" fill="none"/></svg>
<div class="t" style="left:1416px;top:343.02px;font-size:12.85px;line-height:12.85px;color:#444;">99999AutoForms---AutoFormCarOwnerSee</div>
<svg class="a" style="left:1398px;top:360px" width="16" height="16"><rect x="0.5" y="0.5" width="15" height="15" fill="#fff" stroke="#666" stroke-width="1"/><polygon points="14.88,11.70 14.70,12.49 13.59,12.74 13.21,13.21 13.22,14.35 12.49,14.70 11.60,13.98 11.00,13.98 10.11,14.70 9.38,14.35 9.39,13.21 9.01,12.74 7.90,12.49 7.72,11.70 8.62,11.00 8.75,10.41 8.25,9.38 8.75,8.75 9.86,9.01 10.41,8.75 10.90,7.72 11.70,7.72 12.19,8.75 12.74,9.01 13.85,8.75 14.35,9.38 13.85,10.41 13.98,11.00" fill="none" stroke="#cfcfcf" stroke-width="1.1" stroke-linejoin="round"/><circle cx="11.3" cy="11.3" r="0.9" fill="#c4c4c4"/><polygon points="9.58,5.81 9.42,6.62 8.22,6.91 7.87,7.43 8.06,8.65 7.38,9.10 6.33,8.46 5.71,8.58 4.99,9.58 4.18,9.42 3.89,8.22 3.37,7.87 2.15,8.06 1.70,7.38 2.34,6.33 2.22,5.71 1.22,4.99 1.38,4.18 2.58,3.89 2.93,3.37 2.74,2.15 3.42,1.70 4.47,2.34 5.09,2.22 5.81,1.22 6.62,1.38 6.91,2.58 7.43,2.93 8.65,2.74 9.10,3.42 8.46,4.47 8.58,5.09" fill="none" stroke="#f6b04e" stroke-width="1.1" stroke-linejoin="round"/><circle cx="5.4" cy="5.4" r="1.3" fill="none" stroke="#f6b04e" stroke-width="1.1"/><path d="M3 10.5 Q5.5 12.3 8 10.5" stroke="#f6b04e" stroke-width="1.1" fill="none"/></svg>
<div class="t" style="left:1416px;top:364.02px;font-size:12.85px;line-height:12.85px;color:#444;">99999AutoForms---AutoFormCarSeeker</div>
<svg class="a" style="left:1398px;top:381px" width="16" height="16"><rect x="0.5" y="0.5" width="15" height="15" fill="#fff" stroke="#666" stroke-width="1"/><polygon points="14.88,11.70 14.70,12.49 13.59,12.74 13.21,13.21 13.22,14.35 12.49,14.70 11.60,13.98 11.00,13.98 10.11,14.70 9.38,14.35 9.39,13.21 9.01,12.74 7.90,12.49 7.72,11.70 8.62,11.00 8.75,10.41 8.25,9.38 8.75,8.75 9.86,9.01 10.41,8.75 10.90,7.72 11.70,7.72 12.19,8.75 12.74,9.01 13.85,8.75 14.35,9.38 13.85,10.41 13.98,11.00" fill="none" stroke="#cfcfcf" stroke-width="1.1" stroke-linejoin="round"/><circle cx="11.3" cy="11.3" r="0.9" fill="#c4c4c4"/><polygon points="9.58,5.81 9.42,6.62 8.22,6.91 7.87,7.43 8.06,8.65 7.38,9.10 6.33,8.46 5.71,8.58 4.99,9.58 4.18,9.42 3.89,8.22 3.37,7.87 2.15,8.06 1.70,7.38 2.34,6.33 2.22,5.71 1.22,4.99 1.38,4.18 2.58,3.89 2.93,3.37 2.74,2.15 3.42,1.70 4.47,2.34 5.09,2.22 5.81,1.22 6.62,1.38 6.91,2.58 7.43,2.93 8.65,2.74 9.10,3.42 8.46,4.47 8.58,5.09" fill="none" stroke="#f6b04e" stroke-width="1.1" stroke-linejoin="round"/><circle cx="5.4" cy="5.4" r="1.3" fill="none" stroke="#f6b04e" stroke-width="1.1"/><path d="M3 10.5 Q5.5 12.3 8 10.5" stroke="#f6b04e" stroke-width="1.1" fill="none"/></svg>
<div class="t" style="left:1416px;top:385.02px;font-size:12.85px;line-height:12.85px;color:#444;">99999AutoForms---AutoFormHistoricOwne</div>
<svg class="a" style="left:1398px;top:402px" width="16" height="16"><rect x="0.5" y="0.5" width="15" height="15" fill="#fff" stroke="#666" stroke-width="1"/><polygon points="14.88,11.70 14.70,12.49 13.59,12.74 13.21,13.21 13.22,14.35 12.49,14.70 11.60,13.98 11.00,13.98 10.11,14.70 9.38,14.35 9.39,13.21 9.01,12.74 7.90,12.49 7.72,11.70 8.62,11.00 8.75,10.41 8.25,9.38 8.75,8.75 9.86,9.01 10.41,8.75 10.90,7.72 11.70,7.72 12.19,8.75 12.74,9.01 13.85,8.75 14.35,9.38 13.85,10.41 13.98,11.00" fill="none" stroke="#cfcfcf" stroke-width="1.1" stroke-linejoin="round"/><circle cx="11.3" cy="11.3" r="0.9" fill="#c4c4c4"/><polygon points="9.58,5.81 9.42,6.62 8.22,6.91 7.87,7.43 8.06,8.65 7.38,9.10 6.33,8.46 5.71,8.58 4.99,9.58 4.18,9.42 3.89,8.22 3.37,7.87 2.15,8.06 1.70,7.38 2.34,6.33 2.22,5.71 1.22,4.99 1.38,4.18 2.58,3.89 2.93,3.37 2.74,2.15 3.42,1.70 4.47,2.34 5.09,2.22 5.81,1.22 6.62,1.38 6.91,2.58 7.43,2.93 8.65,2.74 9.10,3.42 8.46,4.47 8.58,5.09" fill="none" stroke="#f6b04e" stroke-width="1.1" stroke-linejoin="round"/><circle cx="5.4" cy="5.4" r="1.3" fill="none" stroke="#f6b04e" stroke-width="1.1"/><path d="M3 10.5 Q5.5 12.3 8 10.5" stroke="#f6b04e" stroke-width="1.1" fill="none"/></svg>
<div class="t" style="left:1416px;top:406.02px;font-size:12.85px;line-height:12.85px;color:#444;">99999AutoForms---AutoFormPersonSeeker</div>
<svg class="a" style="left:1398px;top:423px" width="16" height="16"><rect x="0.5" y="0.5" width="15" height="15" fill="#fff" stroke="#666" stroke-width="1"/><polygon points="14.88,11.70 14.70,12.49 13.59,12.74 13.21,13.21 13.22,14.35 12.49,14.70 11.60,13.98 11.00,13.98 10.11,14.70 9.38,14.35 9.39,13.21 9.01,12.74 7.90,12.49 7.72,11.70 8.62,11.00 8.75,10.41 8.25,9.38 8.75,8.75 9.86,9.01 10.41,8.75 10.90,7.72 11.70,7.72 12.19,8.75 12.74,9.01 13.85,8.75 14.35,9.38 13.85,10.41 13.98,11.00" fill="none" stroke="#cfcfcf" stroke-width="1.1" stroke-linejoin="round"/><circle cx="11.3" cy="11.3" r="0.9" fill="#c4c4c4"/><polygon points="9.58,5.81 9.42,6.62 8.22,6.91 7.87,7.43 8.06,8.65 7.38,9.10 6.33,8.46 5.71,8.58 4.99,9.58 4.18,9.42 3.89,8.22 3.37,7.87 2.15,8.06 1.70,7.38 2.34,6.33 2.22,5.71 1.22,4.99 1.38,4.18 2.58,3.89 2.93,3.37 2.74,2.15 3.42,1.70 4.47,2.34 5.09,2.22 5.81,1.22 6.62,1.38 6.91,2.58 7.43,2.93 8.65,2.74 9.10,3.42 8.46,4.47 8.58,5.09" fill="none" stroke="#f6b04e" stroke-width="1.1" stroke-linejoin="round"/><circle cx="5.4" cy="5.4" r="1.3" fill="none" stroke="#f6b04e" stroke-width="1.1"/><path d="M3 10.5 Q5.5 12.3 8 10.5" stroke="#f6b04e" stroke-width="1.1" fill="none"/></svg>
<div class="t" style="left:1416px;top:427.02px;font-size:12.85px;line-height:12.85px;color:#444;">---CarSeeker</div>
<svg class="a" style="left:1398px;top:444px" width="16" height="16"><rect x="0.5" y="0.5" width="15" height="15" fill="#fff" stroke="#666" stroke-width="1"/><polygon points="14.88,11.70 14.70,12.49 13.59,12.74 13.21,13.21 13.22,14.35 12.49,14.70 11.60,13.98 11.00,13.98 10.11,14.70 9.38,14.35 9.39,13.21 9.01,12.74 7.90,12.49 7.72,11.70 8.62,11.00 8.75,10.41 8.25,9.38 8.75,8.75 9.86,9.01 10.41,8.75 10.90,7.72 11.70,7.72 12.19,8.75 12.74,9.01 13.85,8.75 14.35,9.38 13.85,10.41 13.98,11.00" fill="none" stroke="#cfcfcf" stroke-width="1.1" stroke-linejoin="round"/><circle cx="11.3" cy="11.3" r="0.9" fill="#c4c4c4"/><polygon points="9.58,5.81 9.42,6.62 8.22,6.91 7.87,7.43 8.06,8.65 7.38,9.10 6.33,8.46 5.71,8.58 4.99,9.58 4.18,9.42 3.89,8.22 3.37,7.87 2.15,8.06 1.70,7.38 2.34,6.33 2.22,5.71 1.22,4.99 1.38,4.18 2.58,3.89 2.93,3.37 2.74,2.15 3.42,1.70 4.47,2.34 5.09,2.22 5.81,1.22 6.62,1.38 6.91,2.58 7.43,2.93 8.65,2.74 9.10,3.42 8.46,4.47 8.58,5.09" fill="none" stroke="#f6b04e" stroke-width="1.1" stroke-linejoin="round"/><circle cx="5.4" cy="5.4" r="1.3" fill="none" stroke="#f6b04e" stroke-width="1.1"/><path d="M3 10.5 Q5.5 12.3 8 10.5" stroke="#f6b04e" stroke-width="1.1" fill="none"/></svg>
<div class="t" style="left:1416px;top:448.02px;font-size:12.85px;line-height:12.85px;color:#444;">99999AutoForms---CreateAndAddCar</div>
<svg class="a" style="left:1398px;top:465px" width="16" height="16"><rect x="0.5" y="0.5" width="15" height="15" fill="#fff" stroke="#666" stroke-width="1"/><polygon points="14.88,11.70 14.70,12.49 13.59,12.74 13.21,13.21 13.22,14.35 12.49,14.70 11.60,13.98 11.00,13.98 10.11,14.70 9.38,14.35 9.39,13.21 9.01,12.74 7.90,12.49 7.72,11.70 8.62,11.00 8.75,10.41 8.25,9.38 8.75,8.75 9.86,9.01 10.41,8.75 10.90,7.72 11.70,7.72 12.19,8.75 12.74,9.01 13.85,8.75 14.35,9.38 13.85,10.41 13.98,11.00" fill="none" stroke="#cfcfcf" stroke-width="1.1" stroke-linejoin="round"/><circle cx="11.3" cy="11.3" r="0.9" fill="#c4c4c4"/><polygon points="9.58,5.81 9.42,6.62 8.22,6.91 7.87,7.43 8.06,8.65 7.38,9.10 6.33,8.46 5.71,8.58 4.99,9.58 4.18,9.42 3.89,8.22 3.37,7.87 2.15,8.06 1.70,7.38 2.34,6.33 2.22,5.71 1.22,4.99 1.38,4.18 2.58,3.89 2.93,3.37 2.74,2.15 3.42,1.70 4.47,2.34 5.09,2.22 5.81,1.22 6.62,1.38 6.91,2.58 7.43,2.93 8.65,2.74 9.10,3.42 8.46,4.47 8.58,5.09" fill="none" stroke="#f6b04e" stroke-width="1.1" stroke-linejoin="round"/><circle cx="5.4" cy="5.4" r="1.3" fill="none" stroke="#f6b04e" stroke-width="1.1"/><path d="M3 10.5 Q5.5 12.3 8 10.5" stroke="#f6b04e" stroke-width="1.1" fill="none"/></svg>
<div class="t" style="left:1416px;top:469.02px;font-size:12.85px;line-height:12.85px;color:#444;">99999AutoForms---CreateAndAddCar</div>
<svg class="a" style="left:1398px;top:486px" width="16" height="16"><rect x="0.5" y="0.5" width="15" height="15" fill="#fff" stroke="#666" stroke-width="1"/><polygon points="14.88,11.70 14.70,12.49 13.59,12.74 13.21,13.21 13.22,14.35 12.49,14.70 11.60,13.98 11.00,13.98 10.11,14.70 9.38,14.35 9.39,13.21 9.01,12.74 7.90,12.49 7.72,11.70 8.62,11.00 8.75,10.41 8.25,9.38 8.75,8.75 9.86,9.01 10.41,8.75 10.90,7.72 11.70,7.72 12.19,8.75 12.74,9.01 13.85,8.75 14.35,9.38 13.85,10.41 13.98,11.00" fill="none" stroke="#cfcfcf" stroke-width="1.1" stroke-linejoin="round"/><circle cx="11.3" cy="11.3" r="0.9" fill="#c4c4c4"/><polygon points="9.58,5.81 9.42,6.62 8.22,6.91 7.87,7.43 8.06,8.65 7.38,9.10 6.33,8.46 5.71,8.58 4.99,9.58 4.18,9.42 3.89,8.22 3.37,7.87 2.15,8.06 1.70,7.38 2.34,6.33 2.22,5.71 1.22,4.99 1.38,4.18 2.58,3.89 2.93,3.37 2.74,2.15 3.42,1.70 4.47,2.34 5.09,2.22 5.81,1.22 6.62,1.38 6.91,2.58 7.43,2.93 8.65,2.74 9.10,3.42 8.46,4.47 8.58,5.09" fill="none" stroke="#f6b04e" stroke-width="1.1" stroke-linejoin="round"/><circle cx="5.4" cy="5.4" r="1.3" fill="none" stroke="#f6b04e" stroke-width="1.1"/><path d="M3 10.5 Q5.5 12.3 8 10.5" stroke="#f6b04e" stroke-width="1.1" fill="none"/></svg>
<div class="t" style="left:1416px;top:490.02px;font-size:12.85px;line-height:12.85px;color:#444;">99999AutoForms---CreateAndAddCar</div>
<svg class="a" style="left:1398px;top:507px" width="16" height="16"><rect x="0.5" y="0.5" width="15" height="15" fill="#fff" stroke="#666" stroke-width="1"/><polygon points="14.88,11.70 14.70,12.49 13.59,12.74 13.21,13.21 13.22,14.35 12.49,14.70 11.60,13.98 11.00,13.98 10.11,14.70 9.38,14.35 9.39,13.21 9.01,12.74 7.90,12.49 7.72,11.70 8.62,11.00 8.75,10.41 8.25,9.38 8.75,8.75 9.86,9.01 10.41,8.75 10.90,7.72 11.70,7.72 12.19,8.75 12.74,9.01 13.85,8.75 14.35,9.38 13.85,10.41 13.98,11.00" fill="none" stroke="#cfcfcf" stroke-width="1.1" stroke-linejoin="round"/><circle cx="11.3" cy="11.3" r="0.9" fill="#c4c4c4"/><polygon points="9.58,5.81 9.42,6.62 8.22,6.91 7.87,7.43 8.06,8.65 7.38,9.10 6.33,8.46 5.71,8.58 4.99,9.58 4.18,9.42 3.89,8.22 3.37,7.87 2.15,8.06 1.70,7.38 2.34,6.33 2.22,5.71 1.22,4.99 1.38,4.18 2.58,3.89 2.93,3.37 2.74,2.15 3.42,1.70 4.47,2.34 5.09,2.22 5.81,1.22 6.62,1.38 6.91,2.58 7.43,2.93 8.65,2.74 9.10,3.42 8.46,4.47 8.58,5.09" fill="none" stroke="#f6b04e" stroke-width="1.1" stroke-linejoin="round"/><circle cx="5.4" cy="5.4" r="1.3" fill="none" stroke="#f6b04e" stroke-width="1.1"/><path d="M3 10.5 Q5.5 12.3 8 10.5" stroke="#f6b04e" stroke-width="1.1" fill="none"/></svg>
<div class="t" style="left:1416px;top:511.02px;font-size:12.85px;line-height:12.85px;color:#444;">99999AutoForms---CreateAndAddCarOwne</div>
<svg class="a" style="left:1398px;top:528px" width="16" height="16"><rect x="0.5" y="0.5" width="15" height="15" fill="#fff" stroke="#666" stroke-width="1"/><polygon points="14.88,11.70 14.70,12.49 13.59,12.74 13.21,13.21 13.22,14.35 12.49,14.70 11.60,13.98 11.00,13.98 10.11,14.70 9.38,14.35 9.39,13.21 9.01,12.74 7.90,12.49 7.72,11.70 8.62,11.00 8.75,10.41 8.25,9.38 8.75,8.75 9.86,9.01 10.41,8.75 10.90,7.72 11.70,7.72 12.19,8.75 12.74,9.01 13.85,8.75 14.35,9.38 13.85,10.41 13.98,11.00" fill="none" stroke="#cfcfcf" stroke-width="1.1" stroke-linejoin="round"/><circle cx="11.3" cy="11.3" r="0.9" fill="#c4c4c4"/><polygon points="9.58,5.81 9.42,6.62 8.22,6.91 7.87,7.43 8.06,8.65 7.38,9.10 6.33,8.46 5.71,8.58 4.99,9.58 4.18,9.42 3.89,8.22 3.37,7.87 2.15,8.06 1.70,7.38 2.34,6.33 2.22,5.71 1.22,4.99 1.38,4.18 2.58,3.89 2.93,3.37 2.74,2.15 3.42,1.70 4.47,2.34 5.09,2.22 5.81,1.22 6.62,1.38 6.91,2.58 7.43,2.93 8.65,2.74 9.10,3.42 8.46,4.47 8.58,5.09" fill="none" stroke="#f6b04e" stroke-width="1.1" stroke-linejoin="round"/><circle cx="5.4" cy="5.4" r="1.3" fill="none" stroke="#f6b04e" stroke-width="1.1"/><path d="M3 10.5 Q5.5 12.3 8 10.5" stroke="#f6b04e" stroke-width="1.1" fill="none"/></svg>
<div class="t" style="left:1416px;top:532.02px;font-size:12.85px;line-height:12.85px;color:#444;">99999AutoForms---DeleteThis</div>
<svg class="a" style="left:1398px;top:549px" width="16" height="16"><rect x="0.5" y="0.5" width="15" height="15" fill="#fff" stroke="#666" stroke-width="1"/><polygon points="14.88,11.70 14.70,12.49 13.59,12.74 13.21,13.21 13.22,14.35 12.49,14.70 11.60,13.98 11.00,13.98 10.11,14.70 9.38,14.35 9.39,13.21 9.01,12.74 7.90,12.49 7.72,11.70 8.62,11.00 8.75,10.41 8.25,9.38 8.75,8.75 9.86,9.01 10.41,8.75 10.90,7.72 11.70,7.72 12.19,8.75 12.74,9.01 13.85,8.75 14.35,9.38 13.85,10.41 13.98,11.00" fill="none" stroke="#cfcfcf" stroke-width="1.1" stroke-linejoin="round"/><circle cx="11.3" cy="11.3" r="0.9" fill="#c4c4c4"/><polygon points="9.58,5.81 9.42,6.62 8.22,6.91 7.87,7.43 8.06,8.65 7.38,9.10 6.33,8.46 5.71,8.58 4.99,9.58 4.18,9.42 3.89,8.22 3.37,7.87 2.15,8.06 1.70,7.38 2.34,6.33 2.22,5.71 1.22,4.99 1.38,4.18 2.58,3.89 2.93,3.37 2.74,2.15 3.42,1.70 4.47,2.34 5.09,2.22 5.81,1.22 6.62,1.38 6.91,2.58 7.43,2.93 8.65,2.74 9.10,3.42 8.46,4.47 8.58,5.09" fill="none" stroke="#f6b04e" stroke-width="1.1" stroke-linejoin="round"/><circle cx="5.4" cy="5.4" r="1.3" fill="none" stroke="#f6b04e" stroke-width="1.1"/><path d="M3 10.5 Q5.5 12.3 8 10.5" stroke="#f6b04e" stroke-width="1.1" fill="none"/></svg>
<div class="t" style="left:1416px;top:553.02px;font-size:12.85px;line-height:12.85px;color:#444;">99999AutoForms---DeleteThis</div>
<svg class="a" style="left:1398px;top:570px" width="16" height="16"><rect x="0.5" y="0.5" width="15" height="15" fill="#fff" stroke="#666" stroke-width="1"/><polygon points="14.88,11.70 14.70,12.49 13.59,12.74 13.21,13.21 13.22,14.35 12.49,14.70 11.60,13.98 11.00,13.98 10.11,14.70 9.38,14.35 9.39,13.21 9.01,12.74 7.90,12.49 7.72,11.70 8.62,11.00 8.75,10.41 8.25,9.38 8.75,8.75 9.86,9.01 10.41,8.75 10.90,7.72 11.70,7.72 12.19,8.75 12.74,9.01 13.85,8.75 14.35,9.38 13.85,10.41 13.98,11.00" fill="none" stroke="#cfcfcf" stroke-width="1.1" stroke-linejoin="round"/><circle cx="11.3" cy="11.3" r="0.9" fill="#c4c4c4"/><polygon points="9.58,5.81 9.42,6.62 8.22,6.91 7.87,7.43 8.06,8.65 7.38,9.10 6.33,8.46 5.71,8.58 4.99,9.58 4.18,9.42 3.89,8.22 3.37,7.87 2.15,8.06 1.70,7.38 2.34,6.33 2.22,5.71 1.22,4.99 1.38,4.18 2.58,3.89 2.93,3.37 2.74,2.15 3.42,1.70 4.47,2.34 5.09,2.22 5.81,1.22 6.62,1.38 6.91,2.58 7.43,2.93 8.65,2.74 9.10,3.42 8.46,4.47 8.58,5.09" fill="none" stroke="#f6b04e" stroke-width="1.1" stroke-linejoin="round"/><circle cx="5.4" cy="5.4" r="1.3" fill="none" stroke="#f6b04e" stroke-width="1.1"/><path d="M3 10.5 Q5.5 12.3 8 10.5" stroke="#f6b04e" stroke-width="1.1" fill="none"/></svg>
<div class="t" style="left:1416px;top:574.02px;font-size:12.85px;line-height:12.85px;color:#444;">99999AutoForms---DeleteThis</div>
</div></div>
<div class="a" style="left:1369px;top:590px;width:23px;height:21px;background:#cce8fb;border:1px solid #9fd3fb;border-radius:3px"></div>
<svg class="a" style="left:1372px;top:592px" width="18" height="17"><rect x="1.2" y="1.8" width="5.6" height="5.6" rx="1" fill="#fff" stroke="#4cc6b4" stroke-width="1"/><path d="M2.6 4.6 h2.8 M4 3.2 v2.8" stroke="#000" stroke-width="1.1"/><rect x="1.2" y="10.8" width="5.6" height="5.6" rx="1" fill="#fff" stroke="#4cc6b4" stroke-width="1"/><path d="M2.6 13.6 h2.8 M4 12.2 v2.8" stroke="#000" stroke-width="1.1"/><path d="M8.8 3.4 h3" stroke="#444" stroke-width="0.9"/><path d="M9 5.5 h2.5 M13.5 5.5 h2.5 M9 7.5 h2.5 M13.5 7.5 h2.5 M9 9.5 h2.5 M13.5 9.5 h2.5 M9 11.5 h2.5 M13.5 11.5 h2.5 M9 15.9 h2.5 M13.5 15.9 h2.5" stroke="#8a7fc0" stroke-width="0.8"/><path d="M8.8 14.4 h3" stroke="#444" stroke-width="0.9"/></svg>
<div class="t" style="left:1395px;top:592px;font-size:9px;line-height:9px;color:#2b6fd0;font-family:'Liberation Serif';font-weight:bold">A</div>
<div class="t" style="left:1395.5px;top:600.5px;font-size:9px;line-height:9px;color:#b04a5a;font-family:'Liberation Serif'">Z</div>
<svg class="a" style="left:1403px;top:590px" width="8" height="20"><path d="M4.5 3 V17.5 M2 14.5 L4.5 17.8 L7 14.5" fill="none" stroke="#111" stroke-width="1.2"/></svg>
<div class="a" style="left:1417px;top:591px;width:1px;height:21px;background:#a0a0a0"></div>
<svg class="a" style="left:1423px;top:592px" width="18" height="16"><rect x="1.5" y="1.5" width="15" height="13" fill="#ececec" stroke="#b5b5b5"/><path d="M3 5 h12 M3 5 v8 h12 v-8" stroke="#c0c0c0" fill="none"/><path d="M5 8.5 h1 M5 11 h1 M8 11 h5" stroke="#c0c0c0"/></svg>
<div class="a" style="left:1367px;top:614px;width:551px;height:454px;background:#fff;border:1px solid #a0a0a0;border-right:none"></div>
<div class="a" style="left:1368px;top:615px;width:550px;height:19px;background:#f0f0f0"></div>
<div class="a" style="left:1368px;top:633px;width:21px;height:54px;background:#f0f0f0"></div>
<div class="a" style="left:1389px;top:634px;width:245px;height:18px;background:#f0f0f0"></div>
<svg class="a" style="left:1372px;top:618px" width="12" height="10"><path d="M2 3 L6 7 L10 3" fill="none" stroke="#333" stroke-width="1.5"/></svg>
<div class="t" style="left:1393.5px;top:619.59px;font-size:11px;line-height:11px;color:#222;font-weight:bold">Diagram</div>
<div class="a" style="left:1389px;top:651px;width:529px;height:1px;background:#f0f0f0"></div>
<div class="a" style="left:1389px;top:669px;width:529px;height:1px;background:#f0f0f0"></div>
<div class="a" style="left:1389px;top:687px;width:529px;height:1px;background:#f0f0f0"></div>
<div class="a" style="left:1634px;top:633px;width:1px;height:54px;background:#f0f0f0"></div>
<div class="t" style="left:1393.5px;top:637.67px;font-size:11.5px;line-height:11.5px;color:#222;">Color</div>
<div class="t" style="left:1393.5px;top:655.67px;font-size:11.5px;line-height:11.5px;color:#222;">Height</div>
<div class="t" style="left:1393.5px;top:673.67px;font-size:11.5px;line-height:11.5px;color:#222;">Width</div>
<div class="a" style="left:1636px;top:635px;width:20px;height:14px;background:#ffff33;border:1px solid #222"></div>
<div class="t" style="left:1664px;top:638.09px;font-size:11px;line-height:11px;color:#222;">200, 255, 255, 0</div>
<div class="t" style="left:1637px;top:656.09px;font-size:11px;line-height:11px;color:#222;">131</div>
<div class="t" style="left:1637px;top:674.09px;font-size:11px;line-height:11px;color:#222;">462</div>
<div class="a" style="left:1367px;top:1071px;width:551px;height:58px;background:#f0f0f0;border:1px solid #a0a0a0;border-right:none"></div>
<div class="t" style="left:1373px;top:1075.77px;font-size:11.5px;line-height:11.5px;color:#222;font-weight:bold">Color</div>
<div class="t" style="left:1373px;top:1092.97px;font-size:11.5px;line-height:11.5px;color:#222;">placednote.color</div>
</body></html>
